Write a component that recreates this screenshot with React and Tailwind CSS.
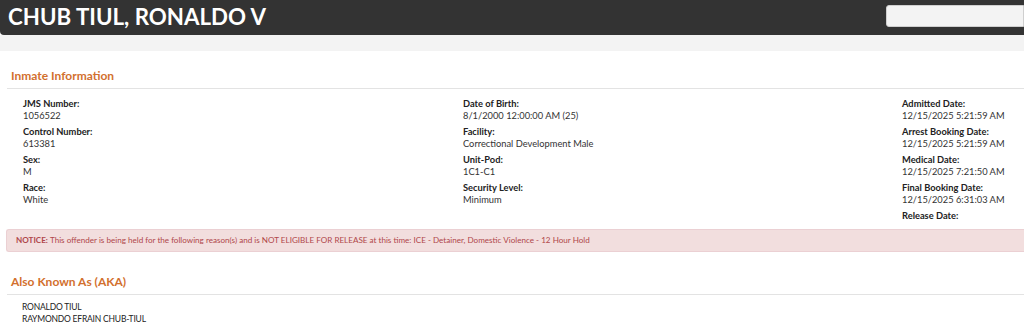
import React from 'react'

const COLUMNS = [
  [
    ['JMS Number:', '1056522'],
    ['Control Number:', '613381'],
    ['Sex:', 'M'],
    ['Race:', 'White'],
  ],
  [
    ['Date of Birth:', '8/1/2000 12:00:00 AM (25)'],
    ['Facility:', 'Correctional Development Male'],
    ['Unit-Pod:', '1C1-C1'],
    ['Security Level:', 'Minimum'],
  ],
  [
    ['Admitted Date:', '12/15/2025 5:21:59 AM'],
    ['Arrest Booking Date:', '12/15/2025 5:21:59 AM'],
    ['Medical Date:', '12/15/2025 7:21:50 AM'],
    ['Final Booking Date:', '12/15/2025 6:31:03 AM'],
    ['Release Date:', ''],
  ],
]

const AKA = ['RONALDO TIUL', 'RAYMONDO EFRAIN CHUB-TIUL']

function SectionTitle({ children }) {
  return (
    <div className="ml-[7px] border-b border-[#e3e3e3] pb-[4px] pl-[4px] text-[12px] font-bold leading-[16px] text-[#d2702e]">
      {children}
    </div>
  )
}

function Field({ label, value }) {
  return (
    <div className="mb-[4px] text-[9.3px] leading-[12px]">
      <div className="font-bold text-[#222]">{label}</div>
      {value && <div className="text-[#333]">{value}</div>}
    </div>
  )
}

export default function App() {
  return (
    <div className="h-[330px] w-[1024px] overflow-hidden bg-white font-['Lato','Liberation_Sans',sans-serif]">
      <header className="flex h-[35px] items-center justify-between rounded-bl-[4px] bg-[#333333] pl-[8px]">
        <h1 className="text-[22.3px] font-bold leading-none text-white">CHUB TIUL, RONALDO V</h1>
        <input
          className="mb-[3px] h-[22px] w-[138px] rounded-l-[3px] border border-[#cfcfcf] bg-[#f3f3f3] outline-none"
          aria-label="Search"
        />
      </header>
      <div className="h-[16px] bg-[#f3f3f3]" />

      <div className="pt-[17px]">
        <SectionTitle>Inmate Information</SectionTitle>
        <div className="grid grid-cols-[440px_439px_1fr] pl-[23px] pt-[9px]">
          {COLUMNS.map((col, i) => (
            <div key={i}>
              {col.map(([label, value]) => (
                <Field key={label} label={label} value={value} />
              ))}
            </div>
          ))}
        </div>

        <div className="ml-[6px] mt-[3px] flex h-[23px] items-center rounded-l-[3px] border border-r-0 border-[#ebd0d3] bg-[#f2dede] pl-[9px] text-[8.1px] text-[#b0474a]">
          <span className="font-bold">NOTICE:</span>
          <span className="ml-[2px]">
            This offender is being held for the following reason(s) and is NOT ELIGIBLE FOR RELEASE at this time: ICE - Detainer, Domestic Violence - 12 Hour Hold
          </span>
        </div>

        <div className="pt-[22px]">
          <SectionTitle>Also Known As (AKA)</SectionTitle>
          <div className="pl-[22px] pt-[6px] text-[8.5px] leading-[12px] tracking-[-0.2px] text-[#222]">
            {AKA.map(name => (
              <div key={name}>{name}</div>
            ))}
          </div>
        </div>
      </div>
    </div>
  )
}
